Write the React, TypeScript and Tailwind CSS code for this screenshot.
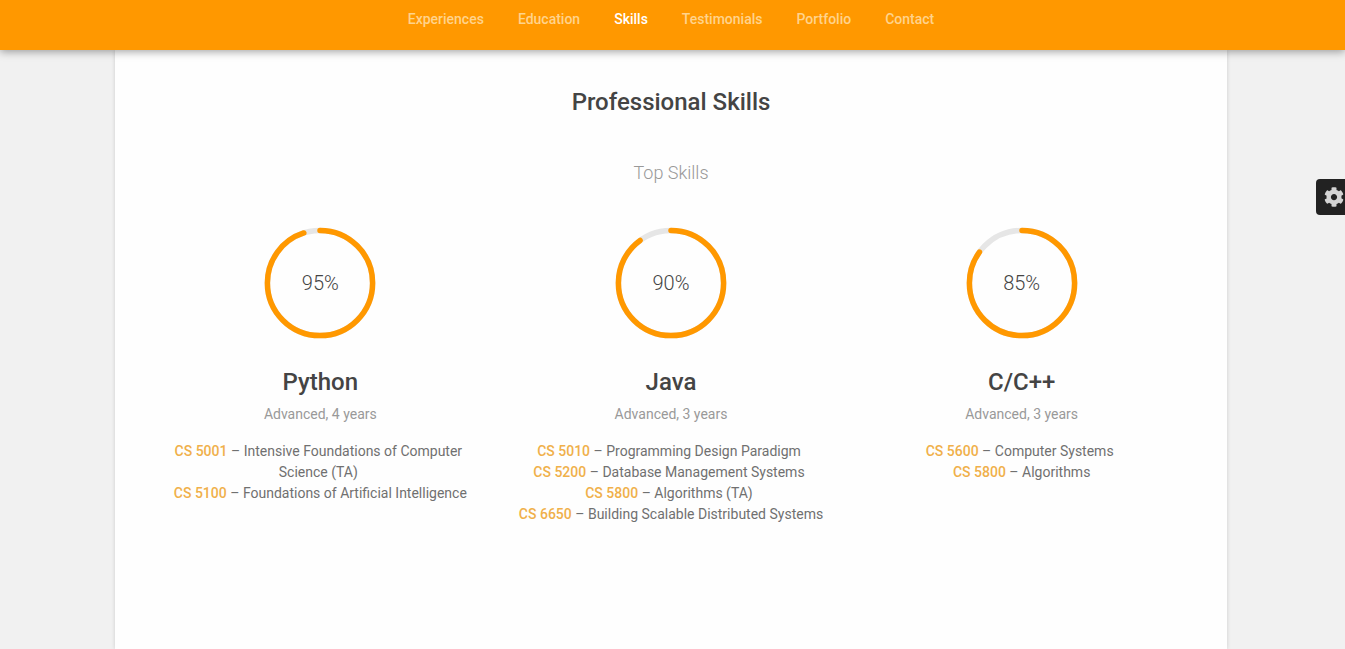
import { FaCog } from "react-icons/fa";

type Course = { code: string; title: string };
type Skill = { name: string; percent: number; level: string; courses: Course[] };

const navItems = ["Experiences", "Education", "Skills", "Testimonials", "Portfolio", "Contact"];

const skills: Skill[] = [
  {
    name: "Python",
    percent: 95,
    level: "Advanced, 4 years",
    courses: [
      { code: "CS 5001", title: "Intensive Foundations of Computer Science (TA)" },
      { code: "CS 5100", title: "Foundations of Artificial Intelligence" },
    ],
  },
  {
    name: "Java",
    percent: 90,
    level: "Advanced, 3 years",
    courses: [
      { code: "CS 5010", title: "Programming Design Paradigm" },
      { code: "CS 5200", title: "Database Management Systems" },
      { code: "CS 5800", title: "Algorithms (TA)" },
      { code: "CS 6650", title: "Building Scalable Distributed Systems" },
    ],
  },
  {
    name: "C/C++",
    percent: 85,
    level: "Advanced, 3 years",
    courses: [
      { code: "CS 5600", title: "Computer Systems" },
      { code: "CS 5800", title: "Algorithms" },
    ],
  },
];

function ProgressRing({ percent }: { percent: number }) {
  return (
    <div className="grid place-items-center">
      <svg viewBox="0 0 112 112" className="col-start-1 row-start-1 size-28" fill="none" strokeWidth="5.5" aria-hidden="true">
        <circle cx="56" cy="56" r="52.6" stroke="#e6e6e6" />
        <circle
          cx="56"
          cy="56"
          r="52.6"
          stroke="#ff9800"
          strokeLinecap="round"
          pathLength={100}
          strokeDasharray={`${percent} 100`}
          transform="rotate(-90 56 56)"
        />
      </svg>
      <span className="col-start-1 row-start-1 text-xl font-light text-[#444]">{percent}%</span>
    </div>
  );
}

function SkillColumn({ skill }: { skill: Skill }) {
  return (
    <article className="flex flex-col items-center px-[15px] text-center">
      <ProgressRing percent={skill.percent} />
      <h3 className="mt-[27px] text-2xl font-medium text-[#444]">{skill.name}</h3>
      <p className="mt-1.5 text-sm text-[#999]">{skill.level}</p>
      <ul className="mt-[17px] text-sm leading-[21px] text-[#707070]">
        {skill.courses.map((course) => (
          <li key={course.code} className="not-last:pr-1">
            <a href="#courses" className="font-medium text-[#f0b04a]">
              {course.code}
            </a>{" "}
            – {course.title}
          </li>
        ))}
      </ul>
    </article>
  );
}

export default function App() {
  return (
    <div className="relative flex min-h-screen flex-col bg-[#f1f1f1] font-['Roboto',sans-serif]">
      <header className="z-10 h-[50px] bg-[#ff9800] shadow-[0_2px_8px_rgba(0,0,0,0.35)]">
        <nav className="flex justify-center gap-[34px] pt-[9px] pr-[3px] text-sm leading-5 font-medium">
          {navItems.map((item) => (
            <a
              key={item}
              href={`#${item.toLowerCase()}`}
              className={item === "Skills" ? "text-white" : "text-[#ffd38c]"}
            >
              {item}
            </a>
          ))}
        </nav>
      </header>
      <main className="mr-[118px] ml-[115px] flex-1 bg-[#fefefe] px-[30px] pb-10 shadow-[0_0_4px_rgba(0,0,0,0.15)]">
        <h1 className="pt-9 text-center text-2xl leading-8 font-medium text-[#444]">Professional Skills</h1>
        <h2 className="mt-[41px] text-center text-lg leading-7 font-light text-[#999]">Top Skills</h2>
        <section className="mt-10 grid grid-cols-3">
          {skills.map((skill) => (
            <SkillColumn key={skill.name} skill={skill} />
          ))}
        </section>
      </main>
      <button
        type="button"
        aria-label="Settings"
        className="absolute top-[179px] right-0 z-20 flex h-9 w-[29px] items-center rounded-l bg-[#222] pl-2 text-[#d4d4d4]"
      >
        <FaCog className="size-5 shrink-0" />
      </button>
    </div>
  );
}
